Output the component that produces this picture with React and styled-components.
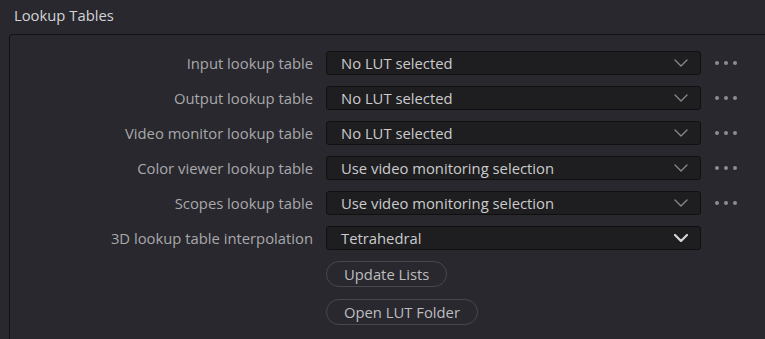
import { Fragment } from "react"
import styled, { createGlobalStyle } from "styled-components"

const Global = createGlobalStyle`
  html, body {
    margin: 0;
    padding: 0;
    background: #28282e;
    overflow: hidden;
  }
  body {
    font-family: "Open Sans", "Noto Sans", sans-serif;
    width: 765px;
    height: 339px;
  }
`;

const Page = styled.div`
  width: 765px;
  height: 339px;
  overflow: hidden;
`;

const Heading = styled.h2`
  margin: 0;
  height: 34px;
  padding: 5px 0 0 14px;
  box-sizing: border-box;
  font-size: 14.8px;
  font-weight: 400;
  color: #d4d4d6;
  line-height: 20px;
`;

const Frame = styled.div`
  margin-left: 9px;
  width: 790px;
  height: 330px;
  border: 1px solid #121214;
  border-radius: 3px;
  padding: 16px 0 0 0;
`;

const Grid = styled.div`
  display: grid;
  grid-template-columns: 303px 375px auto;
  column-gap: 13px;
  row-gap: 11px;
  align-items: center;
`;

const Label = styled.div`
  text-align: right;
  font-size: 14.8px;
  color: #a9a9ab;
  line-height: 24px;
`;

const Select = styled.div`
  height: 24px;
  box-sizing: border-box;
  background: #1e1e20;
  border: 1px solid #101011;
  border-radius: 3px;
  display: flex;
  align-items: center;
  justify-content: space-between;
  padding: 0 12px 0 14px;
  font-size: 14.8px;
  color: #cbcbcd;
`;

const More = styled.div`
  display: flex;
  gap: 5px;
  padding-left: 1px;
  span {
    width: 4px;
    height: 4px;
    border-radius: 50%;
    background: #8d8d90;
  }
`;

const Buttons = styled.div`
  grid-column: 2;
  display: flex;
  flex-direction: column;
  align-items: flex-start;
  gap: 12px;
`;

const Pill = styled.button`
  height: 26px;
  box-sizing: border-box;
  border: 1px solid #47474d;
  border-radius: 13px;
  background: transparent;
  color: #bdbdbf;
  font-family: inherit;
  font-size: 14.8px;
  padding: 0 17px;
  line-height: 24px;
`;

const Chevron = ({ bold }) => (
  <svg width="14" height="8" viewBox="0 0 14 8">
    <path
      d="M1 1 L7 7 L13 1"
      fill="none"
      stroke={bold ? "#d6d6d8" : "#8a8a8d"}
      strokeWidth={bold ? 2.2 : 1.3}
      strokeLinecap="round"
      strokeLinejoin="round"
    />
  </svg>
);

const rows = [
  ["Input lookup table", "No LUT selected", true],
  ["Output lookup table", "No LUT selected", true],
  ["Video monitor lookup table", "No LUT selected", true],
  ["Color viewer lookup table", "Use video monitoring selection", true],
  ["Scopes lookup table", "Use video monitoring selection", true],
  ["3D lookup table interpolation", "Tetrahedral", false],
];

const App = () => {
  return (
    <Page>
      <Global />
      <Heading>Lookup Tables</Heading>
      <Frame>
        <Grid>
          {rows.map(([label, value, more]) => (
            <Fragment key={label}>
              <Label>{label}</Label>
              <Select>
                {value}
                <Chevron bold={!more} />
              </Select>
              {more ? (
                <More>
                  <span />
                  <span />
                  <span />
                </More>
              ) : (
                <div />
              )}
            </Fragment>
          ))}
          <Buttons>
            <Pill>Update Lists</Pill>
            <Pill>Open LUT Folder</Pill>
          </Buttons>
        </Grid>
      </Frame>
    </Page>
  )
}

export default App
